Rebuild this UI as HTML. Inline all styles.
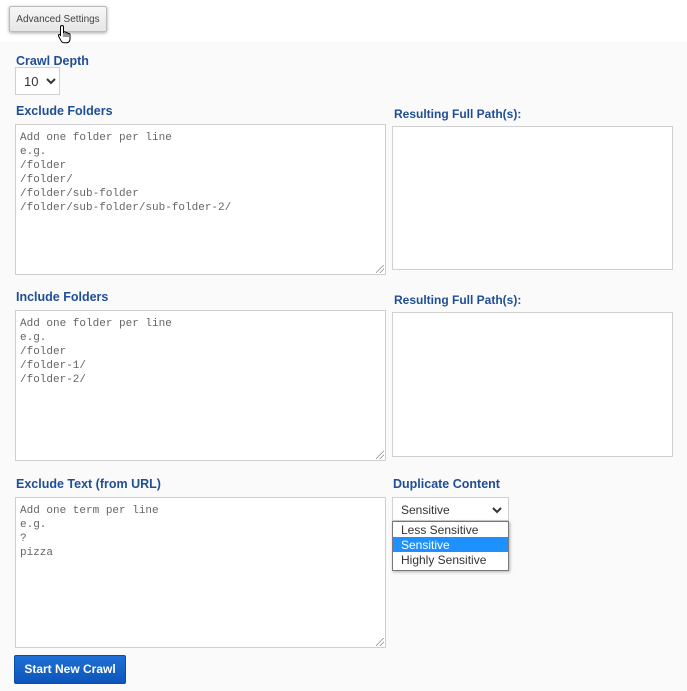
<!DOCTYPE html><html><head><style>
body{margin:0;width:687px;height:691px;background:#fafafa;font-family:"Liberation Sans",sans-serif;position:relative;overflow:hidden}
.top{position:absolute;left:0;top:0;width:687px;height:42px;background:#fff}
.a{position:absolute}
.lbl{position:absolute;font-weight:bold;font-size:12.5px;color:#1f4e96}
.ta{position:absolute;background:#fff;border:1px solid #cfcfcf;box-sizing:border-box;font-family:"Liberation Mono",monospace;font-size:11px;line-height:14px;color:#666;padding:6px 4px 5px;white-space:pre}
.box{position:absolute;background:#fff;border:1px solid #d0d0d0;box-sizing:border-box}
.grip{position:absolute;right:1px;bottom:1px;width:8px;height:8px;background:linear-gradient(135deg,transparent 45%,#888 45%,#888 52%,transparent 52%,transparent 70%,#888 70%,#888 77%,transparent 77%)}
</style></head><body>
<div class="top"></div>
<div class="a" style="left:9px;top:6px;width:98px;height:26px;border:1px solid #bbb;border-radius:2px;background:linear-gradient(#f7f7f7,#e6e6e6);box-shadow:0 1px 3px rgba(0,0,0,.35);font-size:10px;color:#444;line-height:26px;text-align:center;box-sizing:border-box">Advanced Settings</div>
<svg class="a" style="left:57px;top:24px" width="16" height="20" viewBox="0 0 16 20"><path d="M5 1.5c1 0 1.5.6 1.5 1.5v6l.5-1c1-.5 2 0 2 1 .8-.7 2-.3 2 .7.8-.5 2 0 2 1v4c0 2-1 4-3 4H7c-1.5 0-2.5-1-3-2L1.5 12c-.5-1 .5-2 1.5-1.5L3.5 12V3c0-1 .5-1.5 1.5-1.5z" fill="#fff" stroke="#000" stroke-width="1"/><path d="M7 9v4M9 9v4M11 10v3" stroke="#000" stroke-width=".8"/></svg>
<div class="lbl" style="left:16px;top:54px">Crawl Depth</div>
<div class="box" style="left:15px;top:67px;width:45px;height:28px;font-size:13px;color:#333;padding:6px 0 0 8px">10<svg style="position:absolute;left:30px;top:10px" width="10" height="7" viewBox="0 0 10 7"><path d="M1 1l4 4 4-4" fill="none" stroke="#333" stroke-width="2"/></svg></div>
<div class="lbl" style="left:16px;top:104px">Exclude Folders</div>
<div class="lbl" style="left:394px;top:107px;font-size:12px">Resulting Full Path(s):</div>
<div class="ta" style="left:15px;top:124px;width:371px;height:151px">Add one folder per line
e.g.
/folder
/folder/
/folder/sub-folder
/folder/sub-folder/sub-folder-2/<div class="grip"></div></div>
<div class="box" style="left:392px;top:126px;width:281px;height:144px"></div>
<div class="lbl" style="left:16px;top:290px">Include Folders</div>
<div class="lbl" style="left:394px;top:293px;font-size:12px">Resulting Full Path(s):</div>
<div class="ta" style="left:15px;top:310px;width:371px;height:151px">Add one folder per line
e.g.
/folder
/folder-1/
/folder-2/<div class="grip"></div></div>
<div class="box" style="left:392px;top:312px;width:281px;height:145px"></div>
<div class="lbl" style="left:16px;top:477px">Exclude Text (from URL)</div>
<div class="lbl" style="left:393px;top:477px">Duplicate Content</div>
<div class="ta" style="left:15px;top:497px;width:371px;height:151px">Add one term per line
e.g.
?
pizza<div class="grip"></div></div>
<div class="box" style="left:392px;top:497px;width:117px;height:24px;font-size:12px;color:#333;padding:5px 0 0 8px">Sensitive<svg style="position:absolute;right:6px;top:9px" width="10" height="7" viewBox="0 0 10 7"><path d="M1 1l4 4 4-4" fill="none" stroke="#333" stroke-width="2"/></svg></div>
<div class="a" style="left:392px;top:521px;width:117px;height:50px;background:#fff;border:1px solid #777;box-sizing:border-box;font-size:12px;color:#333;box-shadow:1px 1px 3px rgba(0,0,0,.3)">
<div style="height:15px;line-height:16px;padding-left:8px">Less Sensitive</div>
<div style="height:15px;line-height:16px;padding-left:8px;background:#1e90ff;color:#fff">Sensitive</div>
<div style="height:16px;line-height:17px;padding-left:8px">Highly Sensitive</div></div>
<div class="a" style="left:14px;top:655px;width:112px;height:29px;background:linear-gradient(#1f6fd6,#0d55bb);border:1px solid #0b4aa5;border-radius:2px;box-sizing:border-box;color:#fff;font-weight:bold;font-size:12px;line-height:27px;text-align:center">Start New Crawl</div>
</body></html>
